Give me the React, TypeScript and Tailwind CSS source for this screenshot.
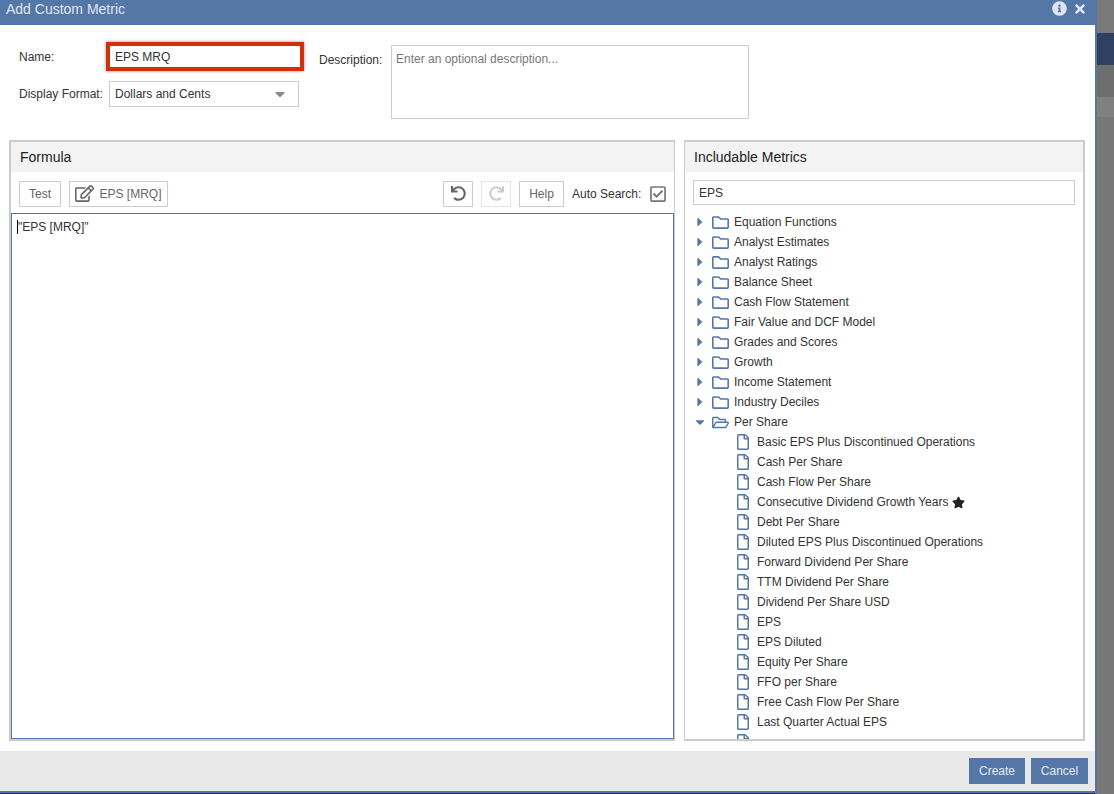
import type { ReactNode } from 'react';
import {
  FaCaretDown,
  FaCaretRight,
  FaInfoCircle,
  FaRedo,
  FaRegCheckSquare,
  FaRegEdit,
  FaRegFile,
  FaRegFolder,
  FaRegFolderOpen,
  FaStar,
  FaTimes,
  FaUndo,
} from 'react-icons/fa';

const folders = [
  'Equation Functions',
  'Analyst Estimates',
  'Analyst Ratings',
  'Balance Sheet',
  'Cash Flow Statement',
  'Fair Value and DCF Model',
  'Grades and Scores',
  'Growth',
  'Income Statement',
  'Industry Deciles',
];

const perShare = [
  'Basic EPS Plus Discontinued Operations',
  'Cash Per Share',
  'Cash Flow Per Share',
  'Consecutive Dividend Growth Years',
  'Debt Per Share',
  'Diluted EPS Plus Discontinued Operations',
  'Forward Dividend Per Share',
  'TTM Dividend Per Share',
  'Dividend Per Share USD',
  'EPS',
  'EPS Diluted',
  'Equity Per Share',
  'FFO per Share',
  'Free Cash Flow Per Share',
  'Last Quarter Actual EPS',
];

function ToolButton({ className, children }: { className: string; children: ReactNode }) {
  return (
    <div className={`flex h-[26px] items-center justify-center border border-[#ccc] bg-white text-[#666] ${className}`}>
      {children}
    </div>
  );
}

function FolderRow({ name, open }: { name: string; open?: boolean }) {
  return (
    <div className="flex h-5 items-center">
      <span className="flex w-[12px] justify-center text-[#5577a8]">
        {open ? <FaCaretDown size={14} /> : <FaCaretRight size={14} />}
      </span>
      <span className="ml-[6px] flex w-[17px] justify-center text-[#5577a8]">
        {open ? <FaRegFolderOpen size={17} /> : <FaRegFolder size={17} />}
      </span>
      <span className="ml-[5px]">{name}</span>
    </div>
  );
}

function MetricRow({ name }: { name: string }) {
  return (
    <div className="flex h-5 items-center pl-[41px]">
      <span className="flex w-[16px] justify-center text-[#5577a8]">
        <FaRegFile size={16} />
      </span>
      <span className="ml-[6px]">{name}</span>
      {name === 'Consecutive Dividend Growth Years' && <FaStar size={13} className="ml-[4px] text-[#222]" />}
    </div>
  );
}

export default function App() {
  return (
    <div className="flex h-[794px] w-[1114px] overflow-hidden bg-[#777] font-['Liberation_Sans',Arial,sans-serif] text-[12px] text-[#333]">
      {/* Dialog */}
      <div className="flex h-[794px] w-[1097px] flex-col border-r-2 border-[#5577a8] bg-white">
        <div className="flex h-[25px] shrink-0 items-start justify-between bg-[#5577a8] pl-[6px] pr-[8px] text-[#dfe6f0]">
          <span className="text-[14px] leading-[18px]">Add Custom Metric</span>
          <div className="flex items-center gap-[6px] pt-[1px]">
            <FaInfoCircle size={15} />
            <FaTimes size={14} />
          </div>
        </div>

        {/* Name / format / description */}
        <div className="flex h-[115px] shrink-0 pl-[19px]">
          <div className="w-[285px] pt-[17px]">
            <div className="flex h-[29px] items-center">
              <span className="w-[87px]">Name:</span>
              <div className="flex h-[29px] w-[198px] items-center border-[4px] border-[#d32f0b] bg-white pl-[5px] shadow-[0_0_3px_rgba(0,0,0,0.45)]">
                EPS MRQ
              </div>
            </div>
            <div className="mt-[10px] flex h-[26px] items-center">
              <span className="w-[90px]">Display Format:</span>
              <div className="flex h-[26px] w-[190px] items-center justify-between border border-[#ccc] pl-[5px] pr-[10px]">
                <span>Dollars and Cents</span>
                <FaCaretDown size={16} className="text-[#888]" />
              </div>
            </div>
          </div>
          <span className="ml-[15px] mt-[26px] w-[72px]">Description:</span>
          <div className="mt-[20px] h-[74px] w-[358px] border border-[#ccc] pl-[4px] pt-[4px] text-[#777]">
            Enter an optional description...
          </div>
        </div>

        {/* Panels */}
        <div className="flex h-[601px] shrink-0 pl-[9px]">
          <div className="flex w-[666px] flex-col border-2 border-r border-[#ccc]">
            <div className="flex h-[30px] shrink-0 items-center bg-[#f3f3f3] pl-[9px] text-[14px] text-[#222]">
              Formula
            </div>
            <div className="flex h-[41px] shrink-0 items-center pb-[0px] pl-[8px] pt-[2px]">
              <ToolButton className="w-[42px]">Test</ToolButton>
              <ToolButton className="ml-[8px] w-[99px] gap-[5px]">
                <FaRegEdit size={19} />
                EPS [MRQ]
              </ToolButton>
              <ToolButton className="ml-[275px] w-[30px]">
                <FaUndo size={15} />
              </ToolButton>
              <ToolButton className="ml-[8px] w-[30px] border-[#e4e4e4] text-[#ccc]">
                <FaRedo size={15} />
              </ToolButton>
              <ToolButton className="ml-[8px] w-[45px]">Help</ToolButton>
              <span className="ml-[8px]">Auto Search:</span>
              <FaRegCheckSquare size={18} className="ml-[8px] text-[#777]" />
            </div>
            <div className="flex-1 border border-[#5577a8] pl-[5px] pt-[4px]">
              <span className="border-l border-black">"EPS [MRQ]"</span>
            </div>
          </div>

          <div className="ml-[9px] flex w-[401px] flex-col border-2 border-l border-[#ccc]">
            <div className="flex h-[30px] shrink-0 items-center bg-[#f3f3f3] pl-[9px] text-[14px] text-[#222]">
              Includable Metrics
            </div>
            <div className="flex h-[40px] shrink-0 items-start pl-[8px] pt-[8px]">
              <div className="flex h-[25px] w-[382px] items-center border border-[#ccc] pl-[5px]">EPS</div>
            </div>
            <div className="h-0 flex-1 overflow-hidden pl-[9px]">
              {folders.map((name) => (
                <FolderRow key={name} name={name} />
              ))}
              <FolderRow name="Per Share" open />
              {perShare.map((name) => (
                <MetricRow key={name} name={name} />
              ))}
              <MetricRow name="" />
            </div>
          </div>
        </div>

        {/* Footer */}
        <div className="mt-[10px] flex h-[40px] shrink-0 items-center justify-end gap-[6px] bg-[#e9e9e9] pr-[7px] text-[#e4eaf3]">
          <div className="flex h-[26px] w-[56px] items-center justify-center bg-[#5577a8]">Create</div>
          <div className="flex h-[26px] w-[57px] items-center justify-center bg-[#5577a8]">Cancel</div>
        </div>
        <div className="h-[2px] shrink-0 bg-[#5577a8]" />
        <div className="flex-1 bg-[#2a3236]" />
      </div>

      {/* Page behind the dialog */}
      <div className="flex-1">
        <div className="h-[33px] bg-[#7a7a7a]" />
        <div className="h-[32px] bg-[#2f4060]" />
        <div className="h-[32px] bg-[#6e6e6e]" />
        <div className="h-[20px] bg-[#808080]" />
      </div>
    </div>
  );
}
